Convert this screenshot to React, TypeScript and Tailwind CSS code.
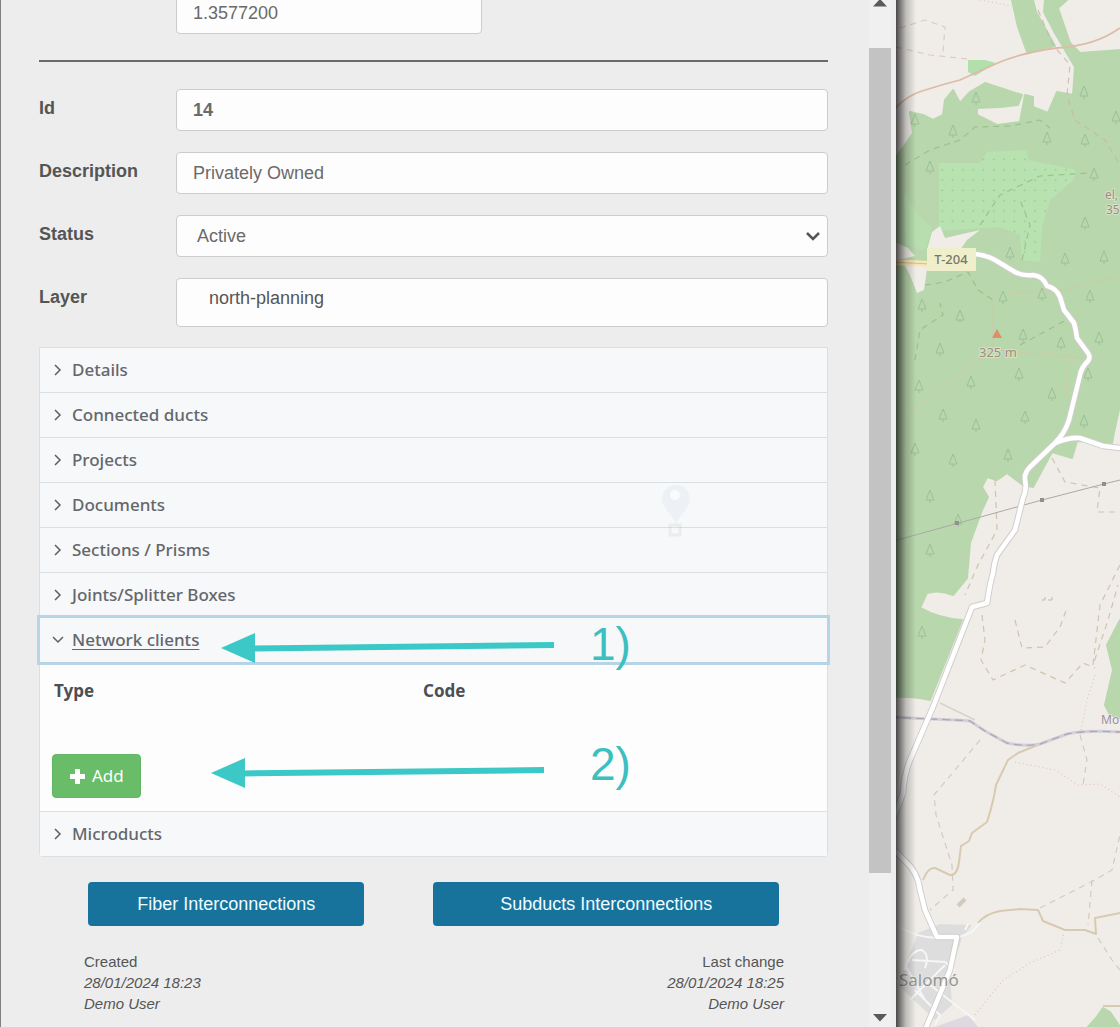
import { useState } from "react";
import type { ReactNode } from "react";

const inputClass =
  "h-[42px] w-full rounded border border-[#cccccc] bg-[#fdfdfd] px-4 text-[18px] text-[#6a6a6a] outline-none";

function Field({ id, label, children }: { id: string; label: string; children: ReactNode }) {
  return (
    <div className="grid grid-cols-[137px_1fr] items-start">
      <label htmlFor={id} className="text-[18px] leading-[38px] font-bold text-[#555555]">
        {label}
      </label>
      {children}
    </div>
  );
}

function Chevron({ open }: { open: boolean }) {
  return (
    <svg width="12" height="12" viewBox="0 0 12 12" fill="none" stroke="#5c6066" strokeWidth="1.5" aria-hidden="true">
      <path d={open ? "M1 3l5 5 5-5" : "M3 1l5 5-5 5"} />
    </svg>
  );
}

function Arrow({ className }: { className: string }) {
  return (
    <svg className={className} width="334" height="32" viewBox="0 0 334 32" aria-hidden="true">
      <path d="M0 16L34 1V31Z" fill="#3cc8c6" />
      <path d="M32 16.5L333 13" stroke="#3cc8c6" strokeWidth="6" />
    </svg>
  );
}

function ClientsPanel() {
  return (
    <div className="relative border-t border-[#dcdfe1] bg-[#fdfdfd] px-3 pt-3 pb-[13px]">
      <table className="w-full table-fixed text-left text-[17px] leading-8 text-[#4c4f54]">
        <thead>
          <tr>
            <th className="w-[369px] pl-[2px] font-bold">Type</th>
            <th className="pl-[2px] font-bold">Code</th>
          </tr>
        </thead>
      </table>
      <button
        type="button"
        className="mt-[47px] flex h-11 items-center gap-1.5 rounded border border-[#62b562] bg-[#69bd69] px-4 text-[17px] text-white"
      >
        <svg width="17" height="17" viewBox="0 0 17 17" fill="#ffffff" aria-hidden="true">
          <path d="M6 1h5v5h5v5h-5v5H6v-5H1V6h5z" />
        </svg>
        Add
      </button>
      <Arrow className="absolute top-[94px] left-[171px]" />
      <span className="absolute top-[75px] left-[550px] font-['Liberation_Sans',sans-serif] text-[46px] leading-[52px] text-[#3cc0bf]">
        2)
      </span>
    </div>
  );
}

const sections = [
  "Details",
  "Connected ducts",
  "Projects",
  "Documents",
  "Sections / Prisms",
  "Joints/Splitter Boxes",
  "Network clients",
  "Microducts",
];

function Accordion() {
  const [open, setOpen] = useState("Network clients");
  return (
    <div className="mt-5 rounded-b border border-[#dcdfe1] font-['Noto_Sans','Open_Sans',sans-serif]">
      {sections.map((name, i) => {
        const isOpen = open === name;
        return (
          <div key={name} className={i === 0 ? "" : "border-t border-[#dcdfe1]"}>
            <div className={isOpen ? "relative z-10 outline-[3px] outline-[#b5d4e5]" : "relative"}>
              <button
                type="button"
                aria-expanded={isOpen}
                onClick={() => setOpen(isOpen ? "" : name)}
                className="flex h-11 w-full items-center gap-2 bg-[#f7f8f9] px-3 text-left text-[17px] font-medium text-[#63676c]"
              >
                <Chevron open={isOpen} />
                <span className={isOpen ? "underline underline-offset-3" : ""}>{name}</span>
              </button>
              {isOpen && name === "Network clients" && (
                <>
                  <Arrow className="absolute top-[14px] left-[181px]" />
                  <span className="absolute top-0 left-[550px] font-['Liberation_Sans',sans-serif] text-[46px] leading-[52px] text-[#3cc0bf]">
                    1)
                  </span>
                </>
              )}
            </div>
            {isOpen && name === "Network clients" && <ClientsPanel />}
          </div>
        );
      })}
    </div>
  );
}

const trees = [
  [976, 98], [915, 120], [953, 131], [1084, 92], [1116, 117], [1047, 138], [1085, 140], [930, 167],
  [1094, 174], [1085, 223], [1010, 253], [1065, 259], [1104, 257], [1003, 297], [1042, 294], [1090, 296],
  [922, 305], [960, 316], [1023, 335], [940, 349], [1061, 343], [1099, 338], [919, 386], [971, 382],
  [1019, 374], [1088, 374], [1052, 394], [943, 415], [976, 425], [1025, 417], [1084, 421], [915, 449],
  [953, 460], [1008, 455], [930, 496], [958, 520], [930, 550], [922, 632],
];

const mainRoads =
  "M975 254Q986 255 995 260L1015 272Q1022 276 1033 275 1043 276 1047 286 1056 288 1060 297L1064 310 1074 323Q1076 330 1077 338L1088 353Q1091 357 1088 361 1081 368 1080 375L1069 420Q1065 433 1055 443L1030 467Q1024 473 1025 480 1027 490 1023 498L1015 530 997 555Q994 563 993 573L990 585 987 603 972 607 933 707 910 760Q904 775 903 793L895 815M1055 443Q1070 437 1080 438L1103 446 1120 448M890 845L904 860Q918 872 920 890L925 910 937 937H957L950 970 925 1030";

function Dashed({ d, color }: { d: string; color: string }) {
  return <path d={d} fill="none" stroke={color} strokeWidth="1.2" strokeDasharray="6 5" strokeLinejoin="round" opacity="0.8" />;
}

function MapView() {
  return (
    <aside aria-label="Map" className="relative w-1/5 overflow-hidden bg-[#f0ede8]">
      <svg
        className="absolute inset-0 h-full w-full"
        viewBox="896 0 224 1027"
        preserveAspectRatio="xMinYMin slice"
        fontFamily="'Noto Sans', sans-serif"
      >
        <defs>
          <pattern id="orchard" width="10.3" height="10.3" patternUnits="userSpaceOnUse">
            <rect width="10.3" height="10.3" fill="#b8e3b0" />
            <circle cx="5" cy="5" r="0.9" fill="#94c794" />
          </pattern>
        </defs>
        <g fill="#b9d7ad" stroke="#b9d7ad" strokeWidth="2" strokeLinejoin="round">
          <path d="M1012 0H1033L1036 12 1055 46 1027 52 1018 27Z" />
          <path d="M890 165L905 145 913 133 910 112 923 115 933 120 943 115 945 100 953 90 960 103 970 92 985 83 1022 95 1018 105 1000 107 977 108 977 115 997 125 1020 122 1025 95 1033 97 1033 107 1048 113 1057 92 1073 95 1075 67 1055 33 1044 12 1045 0H1067L1058 8 1070 43 1080 53 1120 50V405L1113 437 1112 443 1077 441 1072 458 1052 452 1033 487 1023 485 1007 473 997 480 987 477 982 487 988 497 982 510 970 543 967 578 953 595Q940 589 927 593L920 608Q940 619 962 620L930 700Q912 696 890 697Z" />
          <path d="M1120 620L1107 645 1113 670 1105 705 1110 715 1120 718Z" />
          <path d="M1088 1027L1096 1018 1103 1008 1110 1012 1120 1027Z" />
        </g>
        <path
          d="M939 163H980L987 152 1027 150 1028 160 1077 170 1073 180 1050 200 1042 227 1040 262 1022 260 1020 235 1000 227 939 231Z"
          fill="url(#orchard)"
        />
        <path d="M903 190L918 215 932 228 925 250 906 245Z" fill="#b8e3b0" opacity="0.6" />
        <path d="M968 60L985 60 996 63 975 76 968 72Z" fill="#b2dfac" />
        <path d="M903 262H928L924 290 917 293 910 275Z M927 250L932 232 940 226 945 238 980 230 967 240 960 250Z M890 240L908 248 915 256 890 262Z" fill="#f0ede8" />

        <g fill="none" stroke="#9cc097" strokeWidth="1">
          {trees.map(([x, y]) => (
            <path key={`${x}-${y}`} d={`M${x} ${y - 6}L${x - 4} ${y + 4}H${x + 4}ZM${x} ${y + 4}V${y + 7}`} />
          ))}
        </g>

        <Dashed color="#93ba85" d="M905 165L930 150 960 140 975 127 1010 126 1040 120 1050 128" />
        <Dashed color="#93ba85" d="M980 225L1000 195 1040 176 1090 173M1022 260L1030 225 1020 200" />
        <Dashed color="#93ba85" d="M925 285L945 282 968 272 978 290 993 300M915 360L920 330 943 315 940 303M1020 345L1070 318" />
        <Dashed color="#c9b3ab" d="M1038 10L1053 45 1070 65 1067 95 1075 120 1105 140 1120 165" />
        <Dashed color="#cfc6bb" d="M900 28L925 20 945 27 943 52M896 47L930 55 968 59" />
        <Dashed color="#c5ba9f" d="M995 480L997 530 978 565 965 595M982 615L985 640 981 660 993 680 1025 665 1065 683 1083 663 1095 668" />
        <Dashed color="#c5ba9f" d="M1015 620L1022 648 1045 647 1060 627 1067 608M1120 565L1100 605 1093 665 1108 620 1118 585" />
        <Dashed color="#c5ba9f" d="M1052 458L1065 482 1100 488 1097 512 1120 512" />
        <Dashed color="#c9c2b8" d="M980 740L955 770 934 795 936 815 952 865 953 890 930 910M1080 735L1087 760 1083 785" />
        <Dashed color="#c9c2b8" d="M1040 908L1095 880 1112 870 1120 835M1092 880L1088 925M1098 938L1112 960 1120 970" />
        <g fill="none" stroke="#e2c4bc" strokeWidth="1.2" strokeDasharray="1 3">
          <path d="M1015 762L1055 770 1078 785 1100 784 1120 797M975 1015L1003 980 1030 963 1060 950 1064 932M1095 675L1087 700 1080 735M980 0L1012 6" />
        </g>
        <g fill="none" stroke="#d9c3a0" strokeWidth="1" opacity="0.6">
          <path d="M910 412L950 380 993 350 1088 358M993 350L993 300M1007 293L1065 290 1120 275M1065 357L1067 395" />
        </g>

        <path d="M890 114Q905 96 922 91L945 84 960 80 1000 62Q1025 52 1057 48 1095 46 1120 28" fill="none" stroke="#dcbca6" strokeWidth="1.8" />
        <path
          d="M923 880Q928 867 935 868L950 875Q957 876 959 862L961 846 969 841 972 833 987 822Q994 800 996 785L1008 760 1018 753 1040 744M978 923Q985 914 1000 911L1020 909 1038 910 1043 921 1065 930H1085L1096 934 1095 918 1120 913M1103 1006H1120"
          fill="none"
          stroke="#d8cab0"
          strokeWidth="2"
          strokeLinejoin="round"
        />
        <path d="M890 542L1042 500 1104 484 1120 480" fill="none" stroke="#aaa9a6" strokeWidth="1" />
        <g fill="#8f8f8f">
          <rect x="1040" y="498" width="4" height="4" />
          <rect x="1102" y="482" width="4" height="4" />
          <rect x="955" y="521" width="4" height="4" />
        </g>
        <path d="M890 717L930 719Q960 720 970 721L985 731 1007 743Q1025 747 1040 744L1067 734Q1085 730 1120 732" fill="none" stroke="#d3ced8" strokeWidth="3" />
        <path d="M890 717L930 719Q960 720 970 721L985 731 1007 743Q1025 747 1040 744L1067 734Q1085 730 1120 732" fill="none" stroke="#aea9b6" strokeWidth="1.3" strokeDasharray="8 5" />
        <path d="M940 703L975 720" stroke="#d5d2cf" strokeWidth="1.5" />
        <path d="M1042 600h3v-3m3 3h4v-3" fill="none" stroke="#bdb9b4" />
        <path d="M958 906l7-7" stroke="#d3cabd" strokeWidth="4" />

        <path d="M918 933L940 924 972 925 962 938 950 975 952 1005 935 1020 898 985Z" fill="#dedddd" />
        <path d="M935 1027L968 1015 978 1027Z" fill="#dfd8e0" />
        <g fill="none" stroke="#f6f6f6" strokeWidth="2">
          <path d="M900 927Q915 937 937 938M957 938L972 932 980 923M965 930L968 924M905 970Q910 950 922 950 930 955 925 968M915 990L940 1015 935 1025M912 960L945 962 955 970M905 965L925 1000M930 985L975 1020M910 1000L945 965" />
        </g>
        <g fill="none" strokeLinejoin="round" strokeLinecap="round">
          <path d={mainRoads} stroke="#d0cdcd" strokeWidth="6.5" />
          <path d={mainRoads} stroke="#ffffff" strokeWidth="4.6" />
          <path d="M890 262L930 264" stroke="#f5e7b8" strokeWidth="6" />
          <path d="M890 262L930 264" stroke="#d9bf84" strokeWidth="1" />
        </g>

        <rect x="927" y="248" width="49" height="23" rx="1" fill="#eff0cb" />
        <text x="951" y="264" textAnchor="middle" fontSize="13" fontWeight="500" fill="#77776a">T-204</text>
        <path d="M997 329L1002 338H992Z" fill="#dd8f68" />
        <g stroke="#f3efe9" strokeWidth="2" strokeOpacity="0.5" paintOrder="stroke">
          <text x="979" y="357" fontSize="13" fill="#a08c7c">325 m</text>
          <text x="1105" y="199" fontSize="12" fill="#a08c7c">el,</text>
          <text x="1106" y="214" fontSize="12" fill="#a08c7c">35</text>
          <text x="1101" y="724" fontSize="12" fill="#9c8fa8">Mo</text>
          <text x="899" y="986" fontSize="17" fill="#969696">Salomó</text>
        </g>
      </svg>
      <div className="absolute inset-y-0 left-0 w-5 bg-linear-to-r from-black/70 via-black/20 to-transparent" />
    </aside>
  );
}

function Scrollbar() {
  return (
    <div className="mr-[5px] flex w-[22px] flex-col items-center bg-[#f0f0f0]" aria-hidden="true">
      <svg width="14" height="7" viewBox="0 0 14 7" fill="#5a5a5a">
        <path d="M7 -1L14 6.5H0Z" />
      </svg>
      <div className="mt-[41px] mb-[141px] w-full flex-1 bg-[#c3c3c3]" />
      <svg className="mb-[5px]" width="14" height="8" viewBox="0 0 14 8" fill="#5a5a5a">
        <path d="M0 0H14L7 7.5Z" />
      </svg>
    </div>
  );
}

export default function App() {
  return (
    <div className="flex h-screen min-h-[640px] overflow-hidden bg-[#f0ede8] font-['Liberation_Sans',Arial,sans-serif]">
      <main className="relative flex w-4/5 overflow-hidden border-l border-[#808080] bg-[#ededed]">
        <form className="mr-[41px] ml-[38px] min-w-0 flex-1" onSubmit={(e) => e.preventDefault()}>
          <div className="-mt-2 ml-[137px]">
            <input
              aria-label="Longitude"
              defaultValue="1.3577200"
              className="h-[42px] w-[306px] rounded border border-[#cccccc] bg-[#fdfdfd] px-4 text-[18px] text-[#6a6a6a] outline-none"
            />
          </div>
          <hr className="mt-[26px] mb-[27px] border-t-2 border-[#6a6a6a]" />

          <div className="flex flex-col gap-[21px]">
            <Field id="id" label="Id">
              <input id="id" defaultValue="14" className={`${inputClass} font-bold`} />
            </Field>
            <Field id="description" label="Description">
              <input id="description" defaultValue="Privately Owned" className={inputClass} />
            </Field>
            <Field id="status" label="Status">
              <div className="relative">
                <select
                  id="status"
                  defaultValue="Active"
                  className="h-[42px] w-full appearance-none rounded border border-[#cccccc] bg-[#fdfdfd] px-5 text-[18px] text-[#6a6a6a] outline-none"
                >
                  <option>Active</option>
                  <option>Inactive</option>
                </select>
                <svg
                  className="pointer-events-none absolute top-4 right-2"
                  width="14"
                  height="10"
                  viewBox="0 0 14 10"
                  fill="none"
                  stroke="#555555"
                  strokeWidth="2.5"
                  aria-hidden="true"
                >
                  <path d="M1 2l6 6 6-6" />
                </svg>
              </div>
            </Field>
            <Field id="layer" label="Layer">
              <input
                id="layer"
                defaultValue="north-planning"
                className="h-[49px] w-full rounded border border-[#cccccc] bg-[#fdfdfd] px-8 pb-2 text-[18px] text-[#555555] outline-none"
              />
            </Field>
          </div>

          <Accordion />

          <div className="mt-[25px] mr-[49px] ml-[49px] grid grid-cols-[4fr_5fr] gap-[69px]">
            <button type="button" className="h-11 rounded bg-[#17739c] text-[18px] text-[#eefcff]">
              Fiber Interconnections
            </button>
            <button type="button" className="h-11 rounded bg-[#17739c] text-[18px] text-[#eefcff]">
              Subducts Interconnections
            </button>
          </div>

          <footer className="mt-[25px] mr-11 ml-[45px] flex justify-between text-[15px] leading-[21px] text-[#555555]">
            <div>
              <p>Created</p>
              <p className="italic">28/01/2024 18:23</p>
              <p className="italic">Demo User</p>
            </div>
            <div className="text-right">
              <p>Last change</p>
              <p className="italic">28/01/2024 18:25</p>
              <p className="italic">Demo User</p>
            </div>
          </footer>
        </form>
        <Scrollbar />
        <svg className="pointer-events-none absolute top-[484px] left-[660px]" width="32" height="56" viewBox="0 0 32 56" aria-hidden="true">
          <path d="M15 1a14 14 0 0 1 14 14c0 9-9 14-14 25C10 29 1 24 1 15A14 14 0 0 1 15 1Z" fill="#9bb8d8" opacity="0.1" />
          <circle cx="14" cy="11" r="5" fill="#ffffff" opacity="0.7" />
          <rect x="9" y="41" width="10" height="10" fill="none" stroke="#888888" strokeWidth="3" opacity="0.1" />
        </svg>
      </main>
      <MapView />
    </div>
  );
}
